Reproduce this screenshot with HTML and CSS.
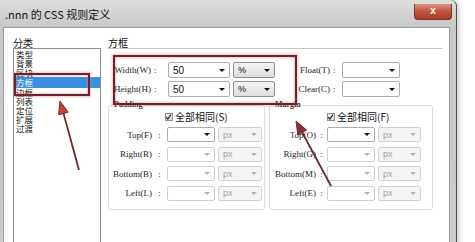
FILE: index.html
```html
<!DOCTYPE html>
<html lang="zh-CN">
<head>
    <meta charset="UTF-8">
    <title>.nnn 的 CSS 规则定义</title>
    <link rel="stylesheet" href="styles.css">
</head>
<body>
    <div class="window">
        <div class="titlebar">
            <span class="title">.nnn 的 CSS 规则定义</span>
            <span class="close">x</span>
        </div>
        <div class="client">
            <div class="category">
                <div class="cap">分类</div>
                <ul class="catlist">
                    <li>类型</li>
                    <li>背景</li>
                    <li>区块</li>
                    <li class="selected">方框</li>
                    <li>边框</li>
                    <li>列表</li>
                    <li>定位</li>
                    <li>扩展</li>
                    <li>过渡</li>
                </ul>
            </div>

            <div class="panel">
                <div class="cap">方框</div>
                <div class="rule"></div>

                <div class="size-grid">
                    <span class="label">Width(W)</span>
                    <span class="colon">:</span>
                    <span class="combo">50</span>
                    <span class="combo unit">%</span>
                    <span class="label">Float(T)</span>
                    <span class="colon">:</span>
                    <span class="combo"></span>

                    <span class="label">Height(H)</span>
                    <span class="colon">:</span>
                    <span class="combo">50</span>
                    <span class="combo unit">%</span>
                    <span class="label">Clear(C)</span>
                    <span class="colon">:</span>
                    <span class="combo"></span>
                </div>

                <div class="groups">
                    <fieldset class="group padding">
                        <legend>Padding</legend>
                        <div class="same">
                            <span class="check"><svg width="8" height="8" viewBox="0 0 8 8"><path d="M1.2 4.2 L3.2 6.3 L6.9 1.2" fill="none" stroke="#1d2a4a" stroke-width="1.4"/></svg></span>
                            全部相同(S)
                        </div>
                        <div class="side-grid">
                            <span class="label">Top(F)</span>
                            <span class="colon">:</span>
                            <span class="combo"></span>
                            <span class="combo unit off">px</span>

                            <span class="label">Right(R)</span>
                            <span class="colon">:</span>
                            <span class="combo off"></span>
                            <span class="combo unit off">px</span>

                            <span class="label">Bottom(B)</span>
                            <span class="colon">:</span>
                            <span class="combo off"></span>
                            <span class="combo unit off">px</span>

                            <span class="label">Left(L)</span>
                            <span class="colon">:</span>
                            <span class="combo off"></span>
                            <span class="combo unit off">px</span>
                        </div>
                    </fieldset>

                    <fieldset class="group margin">
                        <legend>Margin</legend>
                        <div class="same">
                            <span class="check"><svg width="8" height="8" viewBox="0 0 8 8"><path d="M1.2 4.2 L3.2 6.3 L6.9 1.2" fill="none" stroke="#1d2a4a" stroke-width="1.4"/></svg></span>
                            全部相同(F)
                        </div>
                        <div class="side-grid">
                            <span class="label">Top(O)</span>
                            <span class="colon">:</span>
                            <span class="combo"></span>
                            <span class="combo unit off">px</span>

                            <span class="label">Right(G)</span>
                            <span class="colon">:</span>
                            <span class="combo off"></span>
                            <span class="combo unit off">px</span>

                            <span class="label">Bottom(M)</span>
                            <span class="colon">:</span>
                            <span class="combo off"></span>
                            <span class="combo unit off">px</span>

                            <span class="label">Left(E)</span>
                            <span class="colon">:</span>
                            <span class="combo off"></span>
                            <span class="combo unit off">px</span>
                        </div>
                    </fieldset>
                </div>
            </div>
        </div>
    </div>

    <!-- annotations drawn over the screenshot -->
    <div class="mark mark-list"></div>
    <div class="mark mark-size"></div>
    <svg class="arrows" width="475" height="242" viewBox="0 0 475 242">
        <line x1="79" y1="170" x2="63.4" y2="113" stroke="#6e2a2e" stroke-width="1.8"/>
        <polygon points="60,101 68.2,112.2 58.6,114.8" fill="#c8423a" stroke="#6e2a2e" stroke-width="1"/>
        <line x1="331" y1="186" x2="302" y2="132" stroke="#6e2a2e" stroke-width="1.8"/>
        <polygon points="296,121 306.6,130.1 297.8,134.9" fill="#8a3035" stroke="#6e2a2e" stroke-width="1"/>
    </svg>
</body>
</html>
```

FILE: styles.css
```css
* {
    box-sizing: border-box;
}

body {
    margin: 0;
    width: 475px;
    height: 242px;
    overflow: hidden;
    position: relative;
    background-color: #fff;
    font-family: "Liberation Serif", serif;
    color: #1e1e1e;
}

.window {
    width: 457px;
    height: 250px;
    display: flex;
    flex-direction: column;
    padding: 0 6px 0 3px;
    background: linear-gradient(#dedede, #c8c8c8 27px, #cbcbcb);
    border-right: 1px solid #4b4b4b;
    border-top-right-radius: 6px;
    box-shadow: 2px 0 4px rgba(0, 0, 0, 0.2);
}

.titlebar {
    height: 27px;
    display: flex;
    align-items: center;
}

.title {
    padding-left: 2px;
    font-family: "Noto Sans CJK SC", sans-serif;
    font-size: 11px;
    color: #111;
}

.close {
    align-self: flex-start;
    margin: 4px -2px 0 auto;
    width: 38px;
    height: 16px;
    border: 1px solid #7a352c;
    border-top: none;
    border-radius: 0 0 4px 4px;
    background: linear-gradient(#dc9284, #c0543f 50%, #a83a26);
    color: #fff;
    font-family: "Liberation Sans", sans-serif;
    font-weight: bold;
    font-size: 10px;
    line-height: 13px;
    text-align: center;
}

.client {
    flex: 1;
    display: grid;
    grid-template-columns: 88px 335px;
    column-gap: 7px;
    align-items: start;
    padding: 9px 0 0 9px;
    background-color: #fff;
    border: 1px solid #9c9c9c;
    border-bottom: none;
}

.cap {
    height: 11px;
    font-family: "Noto Sans CJK SC", sans-serif;
    font-size: 10px;
    line-height: 11px;
    color: #111;
}

.catlist {
    list-style: none;
    margin: 0;
    padding: 1px 0 0 0;
    height: 200px;
    border: 1px solid #8a8e96;
    font-family: "Noto Sans CJK SC", sans-serif;
    font-size: 8.5px;
}

.catlist li {
    height: 9px;
    line-height: 9px;
    padding-left: 2px;
    color: #111;
}

.catlist li.selected {
    height: 11px;
    line-height: 11px;
    margin-left: 1px;
    padding-left: 1px;
    background-color: #3b8fe2;
    color: #fff;
}

.rule {
    height: 1px;
    background-color: #c6c6c6;
}

.label {
    font-size: 9px;
    text-align: right;
    white-space: nowrap;
}

.colon {
    font-size: 9px;
    text-align: center;
}

.size-grid {
    margin-top: 13px;
    display: grid;
    grid-template-columns: 43px 17px 62px 45px 55px 12px 58px;
    grid-auto-rows: 16px;
    row-gap: 3px;
    align-items: center;
}

.size-grid .colon {
    text-align: left;
    padding-left: 3px;
}

.combo {
    height: 100%;
    display: flex;
    align-items: center;
    padding-left: 4px;
    background-color: #fff;
    border: 1px solid #abadb3;
    border-radius: 2px;
    font-family: "Liberation Sans", sans-serif;
    font-size: 10px;
    color: #111;
}

.combo::after {
    content: "";
    margin-left: auto;
    margin-right: 4px;
    border-left: 3px solid transparent;
    border-right: 3px solid transparent;
    border-top: 3px solid #111;
}

.unit {
    margin-left: 3px;
    background: linear-gradient(#f3f3f3, #dedede);
    border-color: #8e8f8f;
    font-size: 9px;
}

.combo.off {
    border-color: #cfd1d4;
    color: #a2a2a2;
}

.combo.off::after {
    border-top-color: #b4b4b4;
}

.unit.off {
    background: #f4f4f4;
}

.groups {
    margin-top: 4px;
    display: flex;
    gap: 4px;
}

.group {
    margin: 0;
    padding: 0;
    height: 109px;
    border: 1px solid #d5dde3;
    border-radius: 3px;
}

.group.padding {
    width: 157px;
}

.group.margin {
    width: 164px;
}

.group legend {
    margin-left: 4px;
    padding: 0 1px;
    font-size: 8px;
    font-weight: bold;
    line-height: 8px;
    color: #2a2a2a;
}

.same {
    margin-top: 2px;
    height: 11px;
    display: flex;
    align-items: center;
    gap: 2px;
    font-family: "Noto Sans CJK SC", sans-serif;
    font-size: 10px;
    color: #111;
}

.padding .same {
    padding-left: 56px;
}

.margin .same {
    padding-left: 57px;
}

.check {
    width: 8px;
    height: 8px;
    display: flex;
    border: 1px solid #8f8f8f;
    background: linear-gradient(#f0f0f0, #dcdcdc);
}

.check svg {
    margin: -1px 0 0 -1px;
}

.side-grid {
    margin-top: 5px;
    display: grid;
    grid-auto-rows: 15px;
    row-gap: 4.5px;
    align-items: center;
}

.padding .side-grid {
    grid-template-columns: 43px 15px 48px 47px;
}

.margin .side-grid {
    grid-template-columns: 46px 11px 48px 46px;
}

.mark {
    position: absolute;
    border: 2px solid #6b2333;
    box-shadow: 0 0 2px 1px rgba(226, 130, 130, 0.5), inset 0 0 2px 1px rgba(226, 130, 130, 0.5);
}

.mark-list {
    left: 14px;
    top: 73px;
    width: 76px;
    height: 23px;
}

.mark-size {
    left: 113px;
    top: 55px;
    width: 184px;
    height: 50px;
}

.arrows {
    position: absolute;
    left: 0;
    top: 0;
    pointer-events: none;
}
```
